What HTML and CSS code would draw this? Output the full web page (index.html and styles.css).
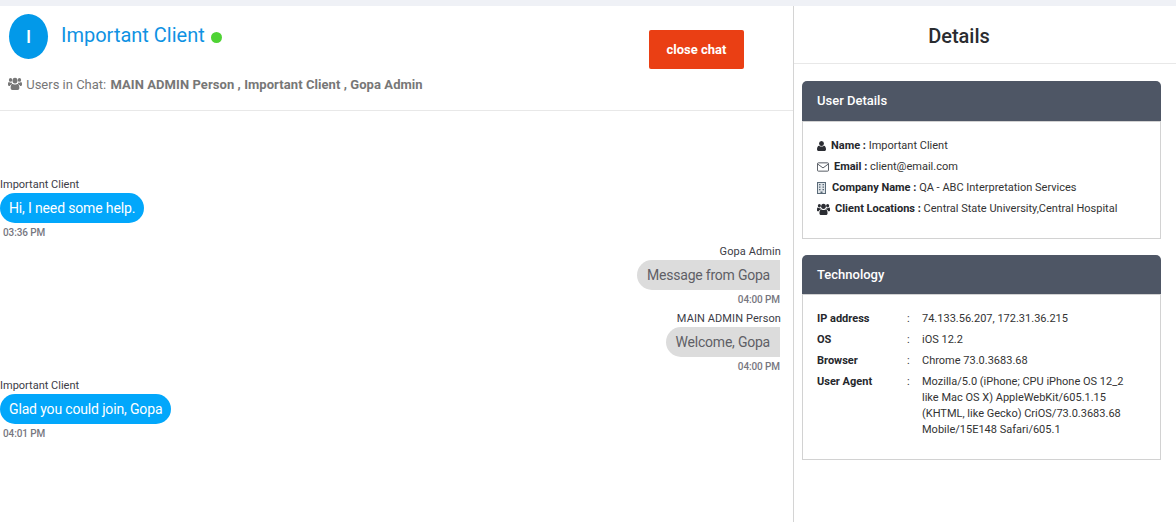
FILE: index.html
```html
<!DOCTYPE html>
<html lang="en">
<head>
<meta charset="utf-8">
<title>Chat</title>
<link rel="stylesheet" href="styles.css">
</head>
<body>
<svg class="defs" width="0" height="0" aria-hidden="true">
  <symbol id="users" viewBox="0 0 16 13" preserveAspectRatio="none">
    <circle cx="8" cy="3.6" r="2.9"/>
    <circle cx="2.9" cy="2.9" r="1.9"/>
    <circle cx="13.1" cy="2.9" r="1.9"/>
    <path d="M4.3 7.2C5 6.6 6.2 7.6 8 7.6s3-1 3.7-.4c1 .7 1.3 2.6 1.3 3.8 0 1.2-.8 2-2 2H5c-1.2 0-2-.8-2-2 0-1.200.3-3.100 1.300-3.800z"/>
    <path d="M0 6.800C0 5.700.4 5 1.200 5c.6.500 1.100.7 1.800.7.500 0 .9-.1 1.300-.3 0 .6.200 1.100.5 1.500C3.200 7.300 2.400 8.400 2.200 9H1.100C.4 9 0 8.500 0 7.800z"/>
    <path d="M16 6.800C16 5.700 15.600 5 14.800 5c-.6.500-1.100.7-1.800.7-.5 0-.9-.1-1.300-.3 0 .6-.2 1.100-.5 1.500 1.600.4 2.400 1.500 2.600 2.100h1.100c.7 0 1.100-.5 1.100-1.200z"/>
  </symbol>
  <symbol id="user" viewBox="0 0 11 12" preserveAspectRatio="none">
    <circle cx="5.500" cy="3" r="3"/>
    <path d="M2.500 5.600C3.300 6.300 4.300 6.700 5.500 6.700s2.200-.4 3-1.100c1.600.2 2.500 2 2.500 4.300 0 1.300-.8 2.100-2 2.100H2c-1.200 0-2-.8-2-2.100 0-2.300.9-4.100 2.500-4.300z"/>
  </symbol>
  <symbol id="envelope" viewBox="0 0 13 10">
    <rect x=".5" y=".5" width="12" height="9" rx="1" fill="none" stroke="currentColor"/>
    <path d="M1 2l5.500 4L12 2" fill="none" stroke="currentColor"/>
  </symbol>
  <symbol id="building" viewBox="0 0 9 12">
    <rect x=".5" y=".5" width="8" height="11" fill="#dfe4e8" stroke="currentColor"/>
    <path d="M2 2h1.500v1.200H2zM5.500 2H7v1.200H5.500zM2 4.500h1.500v1.200H2zM5.500 4.500H7v1.200H5.500zM2 7h1.500v1.200H2zM5.500 7H7v1.200H5.500zM3.500 9.500h2V12h-2z"/>
  </symbol>
</svg>
<div class="topbar"></div>
<main class="layout">
  <section class="chat">
    <header class="chat-head">
      <div class="head-row">
        <div class="avatar">I</div>
        <h1 class="client-name">Important Client</h1>
        <span class="status-dot"></span>
        <button class="close-btn" type="button">close chat</button>
      </div>
      <p class="participants">
        <svg class="ico-users-head"><use href="#users"/></svg>
        Users in Chat: <b>MAIN ADMIN Person , Important Client , Gopa Admin</b>
      </p>
    </header>
    <div class="messages">
      <div class="msg">
        <div class="sender">Important Client</div>
        <div class="bubble">Hi, I need some help.</div>
        <div class="time">03:36 PM</div>
      </div>
      <div class="msg msg-own">
        <div class="sender">Gopa Admin</div>
        <div class="bubble">Message from Gopa</div>
        <div class="time">04:00 PM</div>
      </div>
      <div class="msg msg-own">
        <div class="sender">MAIN ADMIN Person</div>
        <div class="bubble">Welcome, Gopa</div>
        <div class="time">04:00 PM</div>
      </div>
      <div class="msg">
        <div class="sender">Important Client</div>
        <div class="bubble">Glad you could join, Gopa</div>
        <div class="time">04:01 PM</div>
      </div>
    </div>
  </section>
  <aside class="details">
    <h2 class="details-title">Details</h2>
    <div class="cards">
      <section class="card">
        <h3 class="card-head">User Details</h3>
        <div class="card-body user-body">
          <div class="info"><svg class="ico ico-user"><use href="#user"/></svg><b>Name :</b> Important Client</div>
          <div class="info"><svg class="ico ico-env"><use href="#envelope"/></svg><b>Email :</b> client@email.com</div>
          <div class="info"><svg class="ico ico-bld"><use href="#building"/></svg><b>Company Name :</b> QA - ABC Interpretation Services</div>
          <div class="info"><svg class="ico ico-grp"><use href="#users"/></svg><b>Client Locations :</b> Central State University,Central Hospital</div>
        </div>
      </section>
      <section class="card">
        <h3 class="card-head card-head-tech">Technology</h3>
        <div class="card-body tech-body">
          <div class="tech-row"><b class="tech-key">IP address</b><span class="tech-sep">:</span><span>74.133.56.207, 172.31.36.215</span></div>
          <div class="tech-row"><b class="tech-key">OS</b><span class="tech-sep">:</span><span>iOS 12.2</span></div>
          <div class="tech-row"><b class="tech-key">Browser</b><span class="tech-sep">:</span><span>Chrome 73.0.3683.68</span></div>
          <div class="tech-row"><b class="tech-key">User Agent</b><span class="tech-sep">:</span><span class="tech-val">Mozilla/5.0 (iPhone; CPU iPhone OS 12_2 like Mac OS X) AppleWebKit/605.1.15 (KHTML, like Gecko) CriOS/73.0.3683.68 Mobile/15E148 Safari/605.1</span></div>
        </div>
      </section>
    </div>
  </aside>
</main>
</body>
</html>
```

FILE: styles.css
```css
* { box-sizing: border-box; }
html, body { height: 100%; }
body {
  margin: 0;
  background: #fff;
  font-family: Roboto, "Liberation Sans", sans-serif;
  color: #333;
  overflow: hidden;
}
.defs { position: absolute; }
.topbar { height: 6px; background: #eff1f6; }
.layout { display: flex; height: 516px; }

.chat { width: 794px; flex: none; border-right: 1px solid #d4d4d4; }
.chat-head { height: 105px; border-bottom: 1px solid #e8e8e8; }
.head-row { display: flex; align-items: flex-start; height: 63px; padding: 8px 49px 0 9px; }
.avatar {
  width: 39px; height: 45px; border-radius: 50%;
  background: #0299e9; color: #fff;
  display: flex; align-items: center; justify-content: center;
  font-size: 18px; font-weight: 500;
}
.client-name { margin: 8px 0 0 13px; font-size: 20px; line-height: 26px; font-weight: 400; color: #0f92e3; }
.status-dot { width: 11px; height: 11px; border-radius: 50%; background: #4fd334; margin: 18px 0 0 6px; }
.close-btn {
  margin: 16px 0 0 auto; width: 95px; height: 39px;
  border: 0; border-radius: 2px;
  background: #ea3f14; color: #fff;
  font: 700 13px Roboto, "Liberation Sans", sans-serif;
}
.participants { margin: 0 0 0 8px; font-size: 13px; line-height: 16px; color: #777; padding-top: 8px; display: block; }
.participants b { font-weight: 700; letter-spacing: .07px; margin-left: 1px; }
.ico-users-head { width: 14px; height: 13px; margin-right: 1px; fill: #777; vertical-align: -1px; }

.messages { display: flex; flex-direction: column; padding: 66px 13px 0 0; }
.msg { height: 67px; display: flex; flex-direction: column; align-items: flex-start; }
.msg-own { align-items: flex-end; }
.sender { height: 16px; font-size: 11px; line-height: 15px; color: #3c3c46; }
.msg-own .sender { margin-right: -1px; letter-spacing: .1px; }
.bubble {
  height: 30px; padding: 0 9px;
  border-radius: 15px; background: #02a7fb; color: #fff;
  font-size: 14px; line-height: 30px; letter-spacing: -.15px;
}
.msg-own .bubble { background: #dcdcdc; color: #5f5f66; border-radius: 15px 0 0 15px; padding: 0 10px; letter-spacing: -.22px; }
.time { font-size: 10px; line-height: 20px; font-weight: 500; letter-spacing: -.1px; color: #77777f; padding: 0 0 0 3px; }

.details { flex: 1; min-width: 0; }
.details-title {
  margin: 0; height: 58px; border-bottom: 1px solid #e8e8e8;
  padding: 16px 52px 0 0; text-align: center;
  font-size: 20px; line-height: 28px; font-weight: 500; color: #2a2c30;
}
.cards { display: flex; flex-direction: column; gap: 16px; padding: 17px 15px 0 8px; }
.card-head {
  margin: 0; height: 40px; padding: 0 15px;
  background: #4e5665; color: #fff;
  border-radius: 5px 5px 0 0;
  font-size: 13px; line-height: 40px; font-weight: 500;
}
.card-head-tech { height: 39px; line-height: 39px; }
.card-body { border: 1px solid #d2d2d2; font-size: 11px; color: #333; }
.card-body b { font-weight: 700; color: #25272c; }
.user-body { height: 118px; padding: 13px 14px 0; }
.info { height: 21px; line-height: 21px; display: flex; align-items: center; white-space: pre; }
.ico { flex: none; fill: #2b2d33; color: #4a4f58; }
.ico-user { width: 9px; height: 10px; margin-right: 5px; }
.ico-env { width: 12px; height: 10px; margin-right: 5px; }
.ico-bld { width: 9px; height: 12px; margin-right: 6px; color: #5a6a78; fill: #5a6a78; }
.ico-grp { width: 13px; height: 12px; margin-right: 5px; }
.tech-body { height: 166px; padding: 16px 14px 0; }
.tech-row { display: flex; line-height: 16px; margin-bottom: 5px; }
.tech-key { width: 90px; flex: none; }
.tech-sep { width: 15px; flex: none; }
.tech-val { width: 208px; }
```
